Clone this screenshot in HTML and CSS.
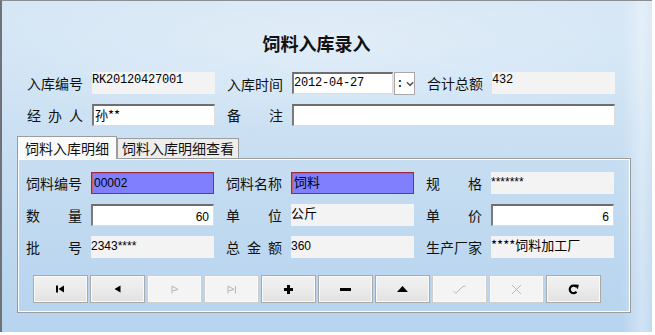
FILE: index.html
```html
<!DOCTYPE html>
<html lang="zh">
<head>
<meta charset="utf-8">
<title>饲料入库录入</title>
<link rel="stylesheet" href="styles.css">
</head>
<body>
<div class="window">
  <h1 class="title">饲料入库录入</h1>

  <div class="form-grid top-form">
    <div class="cell">
      <span class="label">入库编号</span>
      <div class="field ro mono">RK20120427001</div>
    </div>
    <div class="cell">
      <span class="label">入库时间</span>
      <div class="datebox">
        <div class="field input mono date">2012-04-27</div>
        <div class="spin"><span class="colon">:</span><svg width="9" height="6" viewBox="0 0 9 6"><polyline points="1,1 4.5,4.5 8,1" fill="none" stroke="#555" stroke-width="1.6"/></svg></div>
      </div>
    </div>
    <div class="cell">
      <span class="label">合计总额</span>
      <div class="field ro mono">432</div>
    </div>
    <div class="cell">
      <span class="label spread"><i>经</i><i>办</i><i>人</i></span>
      <div class="field input cjk">孙**</div>
    </div>
    <div class="cell wide">
      <span class="label spread"><i>备</i><i>注</i></span>
      <div class="field input"></div>
    </div>
  </div>

  <div class="tabs">
    <div class="tab active">饲料入库明细</div>
    <div class="tab">饲料入库明细查看</div>
  </div>

  <div class="panel">
    <div class="form-grid">
      <div class="cell">
        <span class="label">饲料编号</span>
        <div class="field focus sans">00002</div>
      </div>
      <div class="cell">
        <span class="label">饲料名称</span>
        <div class="field focus cjk">饲料</div>
      </div>
      <div class="cell">
        <span class="label spread"><i>规</i><i>格</i></span>
        <div class="field ro sans">*******</div>
      </div>

      <div class="cell">
        <span class="label spread"><i>数</i><i>量</i></span>
        <div class="field input sans num">60</div>
      </div>
      <div class="cell">
        <span class="label spread"><i>单</i><i>位</i></span>
        <div class="field ro cjk">公斤</div>
      </div>
      <div class="cell">
        <span class="label spread"><i>单</i><i>价</i></span>
        <div class="field input sans num">6</div>
      </div>

      <div class="cell">
        <span class="label spread"><i>批</i><i>号</i></span>
        <div class="field ro sans">2343****</div>
      </div>
      <div class="cell">
        <span class="label spread"><i>总</i><i>金</i><i>额</i></span>
        <div class="field ro sans">360</div>
      </div>
      <div class="cell">
        <span class="label">生产厂家</span>
        <div class="field ro cjk">****饲料加工厂</div>
      </div>
    </div>

    <div class="toolbar">
      <button class="btn" type="button"><svg width="9" height="8" viewBox="0 0 9 8"><rect x="0" y="0.5" width="2" height="7" fill="#000"/><polygon points="8,0.5 8,7.5 2.5,4" fill="#000"/></svg></button>
      <button class="btn" type="button"><svg width="7" height="8" viewBox="0 0 7 8"><polygon points="6.5,0.5 6.5,7.5 0.5,4" fill="#000"/></svg></button>
      <button class="btn off" type="button"><svg width="8" height="9" viewBox="0 0 8 9"><polyline points="1,8.5 1,1 7,4.5 1.5,6" fill="none" stroke="#b4b4b4" stroke-width="1"/></svg></button>
      <button class="btn off" type="button"><svg width="10" height="9" viewBox="0 0 10 9"><polyline points="1,8.5 1,1 7,4.5 1.5,6" fill="none" stroke="#b4b4b4" stroke-width="1"/><line x1="8.5" y1="1" x2="8.5" y2="8.5" stroke="#b4b4b4" stroke-width="1"/></svg></button>
      <button class="btn" type="button"><svg width="9" height="9" viewBox="0 0 9 9"><rect x="3" y="0" width="3" height="9" fill="#000"/><rect x="0" y="3" width="9" height="3" fill="#000"/></svg></button>
      <button class="btn" type="button"><svg width="11" height="3" viewBox="0 0 11 3"><rect x="0" y="0" width="11" height="3" fill="#000"/></svg></button>
      <button class="btn" type="button"><svg width="11" height="6" viewBox="0 0 11 6"><polygon points="0,6 11,6 5.5,0" fill="#000"/></svg></button>
      <button class="btn off" type="button"><svg width="13" height="9" viewBox="0 0 13 9"><polyline points="0.5,6 3,8.5 7,4 10,1.5 12.5,1" fill="none" stroke="#b8b8b8" stroke-width="1"/></svg></button>
      <button class="btn off" type="button"><svg width="11" height="11" viewBox="0 0 11 11"><path d="M1 1 L10 10 M10 1 L1 10" fill="none" stroke="#b8b8b8" stroke-width="1"/></svg></button>
      <button class="btn" type="button"><svg width="11" height="11" viewBox="0 0 11 11"><path d="M8.3 2.8 A3.8 3.8 0 1 0 8.5 7.8" fill="none" stroke="#000" stroke-width="2.2"/><polygon points="6,0.5 10.8,0.8 9.8,5.3" fill="#000"/></svg></button>
    </div>
  </div>
</div>
</body>
</html>
```

FILE: styles.css
```css
* { box-sizing: border-box; }

html, body {
  margin: 0;
  padding: 0;
  background: #ffffff;
}

.window {
  width: 652px;
  height: 332px;
  border-left: 2px solid #6f7378;
  border-top: 1px solid #8a8e92;
  background:
    linear-gradient(90deg, rgba(255,255,255,0) 0, rgba(255,255,255,0) 620px, rgba(255,255,255,0.35) 640px, rgba(255,255,255,0.1) 652px),
    radial-gradient(ellipse 420px 90px at 330px 40px, rgba(255,255,255,0.35), rgba(255,255,255,0)),
    linear-gradient(180deg, #d3e5f4 0, #cfe3f4 90px, #c6ddf1 170px, #bcd7ef 260px, #b7d4ee 332px);
  font-family: "Noto Sans CJK SC", "Noto Sans", sans-serif;
  color: #000;
  overflow: hidden;
}

.title {
  margin: 0;
  padding-top: 30px;
  height: 54px;
  line-height: 24px;
  font-size: 18px;
  font-weight: bold;
  text-align: center;
  color: #111;
  padding-left: 0;
  padding-right: 21px;
}

.form-grid {
  display: grid;
  grid-template-columns: 188px 188px 188px;
  column-gap: 12px;
  row-gap: 10px;
}

.top-form {
  margin-top: 17px;
  padding-left: 25px;
}

.cell {
  display: grid;
  grid-template-columns: 65px 1fr;
  align-items: center;
  height: 22px;
}

.cell.wide {
  grid-column: span 2;
}

.label {
  display: block;
  width: 56px;
  font-size: 14px;
  line-height: 22px;
  white-space: nowrap;
  color: #111;
}

.label.spread {
  display: flex;
  justify-content: space-between;
}

.label i {
  font-style: normal;
}

.field {
  height: 22px;
  font-size: 12px;
  line-height: 14px;
  padding: 3px 0 0 0;
  white-space: nowrap;
  overflow: hidden;
}

.ro {
  background: #f3f3f3;
}

.input {
  background: #ffffff;
  border-style: solid;
  border-width: 2px 1px 1px 2px;
  border-color: #6e6e6e #dcdcdc #dcdcdc #7a7a7a;
  padding: 2px 0 0 1px;
  line-height: 16px;
}

.focus {
  background: #8080ff;
  border: 1px solid #a12a3a;
  box-shadow: inset 1px 1px 0 #c06070;
  padding: 2px 0 0 2px;
  line-height: 16px;
}

.mono {
  font-family: "Liberation Mono", monospace;
  font-size: 12px;
  letter-spacing: -0.2px;
  padding-left: 0;
}

.ro.mono { padding-top: 1px; }
.input.mono { padding-top: 1px; }

.sans {
  font-family: "Liberation Sans", Arial, sans-serif;
  font-size: 12px;
  color: #000;
}

.cjk {
  font-family: "Noto Sans CJK SC", sans-serif;
  font-size: 13px;
}

.ro.cjk { padding-top: 0; line-height: 18px; }
.focus.cjk { line-height: 17px; padding-top: 0; }
.input.cjk { line-height: 17px; padding-top: 0; }

.num {
  text-align: right;
  padding-right: 4px;
  padding-top: 3px;
}

.datebox {
  display: flex;
  align-items: stretch;
  height: 23px;
}

.date {
  width: 101px;
  height: 22px;
}

.spin {
  width: 21px;
  height: 23px;
  margin-left: 1px;
  background: #ffffff;
  border: 1px solid #a8a8a8;
  display: flex;
  align-items: center;
  gap: 2px;
  padding-left: 1px;
}

.colon {
  font-family: "Liberation Mono", monospace;
  font-size: 13px;
  line-height: 13px;
}

.tabs {
  margin-top: 10px;
  margin-left: 15px;
  display: flex;
  align-items: flex-end;
  height: 22px;
  position: relative;
  z-index: 2;
}

.tab {
  font-size: 14px;
  line-height: 19px;
  height: 20px;
  padding: 0 4px;
  border: 1px solid #9c9c9c;
  border-bottom: none;
  background: #ededed;
  white-space: nowrap;
  color: #111;
}

.tab.active {
  width: 100px;
  height: 23px;
  margin-bottom: -1px;
  padding: 2px 0 0 7px;
  background: #fbfbfb;
  line-height: 18px;
}

.panel {
  position: relative;
  z-index: 1;
  margin-left: 15px;
  width: 614px;
  border: 1px solid #9c9c9c;
  box-shadow: inset 0 0 0 1px #ffffff;
  padding: 13px 0 9px 8px;
}

.toolbar {
  display: flex;
  gap: 2px;
  margin-top: 17px;
  padding-left: 7px;
}

.btn {
  width: 55px;
  height: 28px;
  margin: 0;
  padding: 0;
  border: 1px solid #a9a9a9;
  box-shadow: inset 0 0 0 1px #fafafa;
  background: linear-gradient(180deg, #f1f1f1 0, #ebebeb 50%, #e2e2e2 100%);
  display: flex;
  align-items: center;
  justify-content: center;
}

.btn.off {
  border-color: #cdcdcd;
  background: #f4f4f4;
}

.btn svg {
  display: block;
}
```
